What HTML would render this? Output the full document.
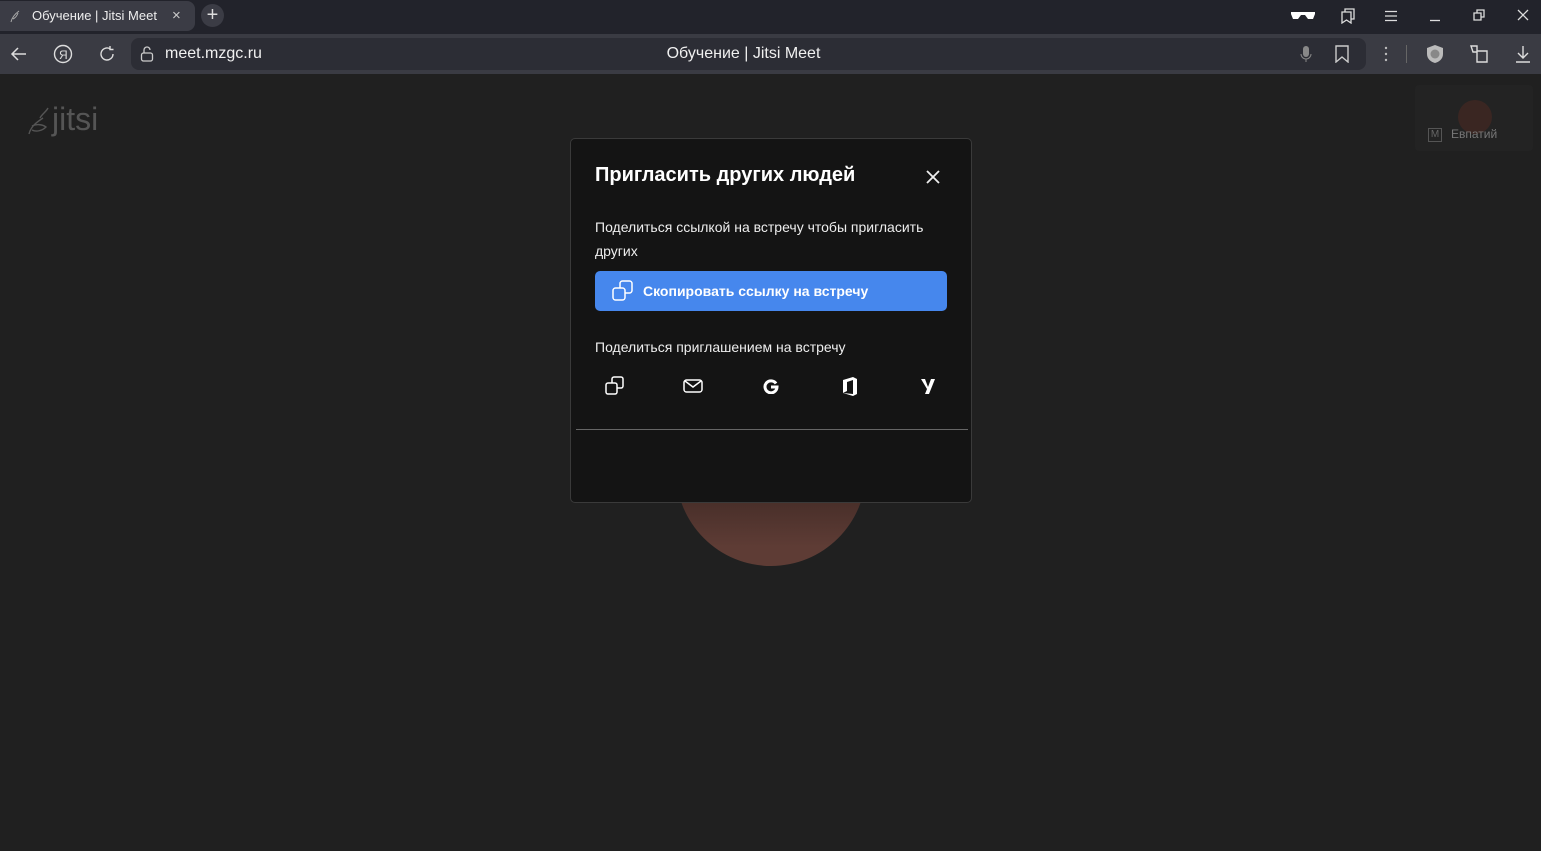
<!DOCTYPE html>
<html><head><meta charset="utf-8"><style>
*{margin:0;padding:0;box-sizing:border-box}
body{width:1541px;height:851px;background:#202020;font-family:"Liberation Sans",sans-serif;overflow:hidden;position:relative;color:#fff}
.tabs{position:absolute;left:0;top:0;width:1541px;height:34px;background:#22232b}
.tab{position:absolute;left:0;top:1px;width:195px;height:30px;background:#3b3c45;border-radius:0 8px 8px 0;font-size:13px;line-height:30px;padding-left:32px;color:#eee}
.plus{position:absolute;left:201px;top:4px;width:23px;height:23px;border-radius:50%;background:#3b3c45;color:#ddd;text-align:center;line-height:22px;font-size:20px}
.bar{position:absolute;left:0;top:34px;width:1541px;height:40px;background:#3a3b43}
.addr{position:absolute;left:131px;top:38px;width:1235px;height:32px;background:#2c2d35;border-radius:8px}
.ico{position:absolute;color:#ddd}
.dlg{position:absolute;left:570px;top:138px;width:402px;height:365px;background:#141414;border:1px solid #3a3a3a;border-radius:5px}
.btn{position:absolute;left:24px;top:132px;width:352px;height:40px;background:#4687ed;border-radius:5px;font-weight:bold;font-size:14px;line-height:40px;padding-left:48px}
</style></head><body>
<div class="tabs">
<div class="tab">Обучение | Jitsi Meet<span style="position:absolute;left:172px;color:#ccc;font-size:15px">×</span>
<svg style="position:absolute;left:9px;top:8px" width="12" height="14" viewBox="0 0 12 14"><path d="M2 13 C3 8 6 5 10 2 M4 10 C6 9 8 7 9 4" stroke="#aaa" fill="none"/></svg></div>
<div class="plus">+</div>
<svg class="ico" style="left:1290px;top:10px" width="26" height="12"><path d="M1 2h24v2l-2 5h-5l-3-4h-4l-3 4H3L1 4z" fill="#fff"/></svg>
<svg class="ico" style="left:1340px;top:8px" width="16" height="16" fill="none" stroke="#ddd" stroke-width="1.3"><path d="M5 4V1h9v10h-3M2 4h9v11l-4.5-3L2 15z"/></svg>
<svg class="ico" style="left:1384px;top:10px" width="14" height="12" stroke="#ddd" stroke-width="1.3"><path d="M1 1.5h12M1 6h12M1 10.5h12"/></svg>
<svg class="ico" style="left:1429px;top:10px" width="12" height="12" stroke="#ddd" stroke-width="1.3"><path d="M1 10.5h10"/></svg>
<svg class="ico" style="left:1473px;top:9px" width="12" height="12" fill="none" stroke="#ddd" stroke-width="1.3"><path d="M1 4h7v7H1zM4 4V1h7v7H8"/></svg>
<svg class="ico" style="left:1517px;top:9px" width="12" height="12" stroke="#ddd" stroke-width="1.3"><path d="M1 1l10 10M11 1L1 11"/></svg>
</div>
<div class="bar"></div>
<div class="addr"></div>
<svg class="ico" style="left:10px;top:46px" width="18" height="16" fill="none" stroke="#ddd" stroke-width="1.5"><path d="M16 8H2M8 2L2 8l6 6"/></svg>
<svg class="ico" style="left:53px;top:44px" width="20" height="20" fill="none" stroke="#ddd" stroke-width="1.4"><circle cx="10" cy="10" r="8.5"/><text x="6" y="15" font-size="12" fill="#ddd" stroke="none" font-family="Liberation Sans">Я</text></svg>
<svg class="ico" style="left:98px;top:45px" width="18" height="18" fill="none" stroke="#ddd" stroke-width="1.4"><path d="M15 9a6 6 0 1 1-3-5.2M12 1v3.5h3.5"/></svg>
<svg class="ico" style="left:140px;top:46px" width="14" height="16" fill="none" stroke="#ccc" stroke-width="1.3"><rect x="1.5" y="7" width="11" height="8" rx="2"/><path d="M4 7V4a3 3 0 0 1 6 0"/></svg>
<div style="position:absolute;left:165px;top:45px;font-size:16px;color:#f0f0f0">meet.mzgc.ru</div>
<div style="position:absolute;left:0;width:1487px;top:45px;text-align:center;font-size:16px;color:#f0f0f0">Обучение | Jitsi Meet</div>
<svg class="ico" style="left:1300px;top:45px" width="12" height="18"><rect x="3" y="1" width="6" height="11" rx="3" fill="#888"/><path d="M1 9a5 5 0 0 0 10 0M6 14v3" stroke="#888" fill="none"/></svg>
<svg class="ico" style="left:1335px;top:45px" width="14" height="18" fill="none" stroke="#ccc" stroke-width="1.4"><path d="M1 1h12v16l-6-5-6 5z"/></svg>
<svg class="ico" style="left:1384px;top:46px" width="4" height="16" fill="#bbb"><circle cx="2" cy="2" r="1.2"/><circle cx="2" cy="8" r="1.2"/><circle cx="2" cy="14" r="1.2"/></svg>
<div style="position:absolute;left:1406px;top:45px;width:1px;height:18px;background:#666"></div>
<svg class="ico" style="left:1426px;top:44px" width="18" height="20"><path d="M9 1l8 3v6c0 5-4 8-8 9-4-1-8-4-8-9V4z" fill="#bbb"/><circle cx="9" cy="10" r="4.5" fill="#888"/></svg>
<svg class="ico" style="left:1469px;top:45px" width="20" height="18" fill="none" stroke="#ddd" stroke-width="1.4"><path d="M2 1h6v5h10v11H8V7H4z"/></svg>
<svg class="ico" style="left:1515px;top:45px" width="16" height="18" fill="none" stroke="#ddd" stroke-width="1.4"><path d="M8 1v12M3 8l5 5 5-5M1 17h14"/></svg>

<div style="position:absolute;left:52px;top:101px;font-size:32px;color:#555">jitsi</div>
<svg style="position:absolute;left:26px;top:106px" width="24" height="30" fill="none" stroke="#555" stroke-width="1.4"><path d="M3 28c2-8 8-12 14-16M6 20c4-2 10-2 14 1-4 4-10 5-14 3M14 12c2-4 6-6 8-10"/></svg>
<div style="position:absolute;left:1415px;top:85px;width:118px;height:66px;background:#232323;border-radius:4px"></div>
<div style="position:absolute;left:1458px;top:100px;width:34px;height:34px;border-radius:50%;background:#3a2622"></div>
<div style="position:absolute;left:1428px;top:128px;width:14px;height:14px;border:1px solid #555;font-size:10px;color:#666;text-align:center;line-height:12px">M</div>
<div style="position:absolute;left:1451px;top:127px;font-size:12px;color:#777">Евпатий</div>

<div style="position:absolute;left:676px;top:376px;width:190px;height:190px;border-radius:50%;background:linear-gradient(#3a2622 50%,#5e3c35 90%)"></div>

<div class="dlg">
<div style="position:absolute;left:24px;top:25px;font-size:20px;font-weight:bold">Пригласить других людей</div>
<svg style="position:absolute;left:355px;top:31px" width="14" height="14" stroke="#eee" stroke-width="1.8"><path d="M1 1l12 12M13 1L1 13"/></svg>
<div style="position:absolute;left:24px;top:76px;width:350px;font-size:14px;line-height:24px;color:#eee">Поделиться ссылкой на встречу чтобы пригласить других</div>
<div class="btn">Скопировать ссылку на встречу
<svg style="position:absolute;left:17px;top:9px" width="22" height="22" fill="none" stroke="#fff" stroke-width="1.5"><rect x="1" y="8" width="12" height="12" rx="2.5"/><path d="M8 8V3.5A2.5 2.5 0 0 1 10.5 1h7A2.5 2.5 0 0 1 20 3.5v7a2.5 2.5 0 0 1-2.5 2.5H13"/></svg></div>
<div style="position:absolute;left:24px;top:200px;font-size:14px;color:#eee">Поделиться приглашением на встречу</div>
<svg style="position:absolute;left:34px;top:237px" width="20" height="20" fill="none" stroke="#fff" stroke-width="1.5"><rect x="1" y="7" width="11" height="11" rx="2"/><path d="M7 7V3a2 2 0 0 1 2-2h7a2 2 0 0 1 2 2v7a2 2 0 0 1-2 2h-4"/></svg>
<svg style="position:absolute;left:112px;top:240px" width="20" height="15" fill="none" stroke="#fff" stroke-width="1.5"><rect x="1" y="1" width="18" height="12" rx="2.5"/><path d="M2 2l8 6 8-6"/></svg>
<svg style="position:absolute;left:192px;top:239px" width="16" height="16" fill="none" stroke="#fff" stroke-width="3"><path d="M13 5.5A6 6 0 1 0 14 9H8"/></svg>
<svg style="position:absolute;left:270px;top:237px" width="18" height="21"><path d="M2 4L12 1l4 2v15l-4 2-10-3 10 1V4L6 6v9L2 17z" fill="#fff"/></svg>
<svg style="position:absolute;left:349px;top:239px" width="16" height="17"><path d="M1 1h4l3 8 3-8h4l-6 15H5l2-5z" fill="#fff"/></svg>
<div style="position:absolute;left:5px;top:290px;width:392px;height:1px;background:#666"></div>
</div>
</body></html>
